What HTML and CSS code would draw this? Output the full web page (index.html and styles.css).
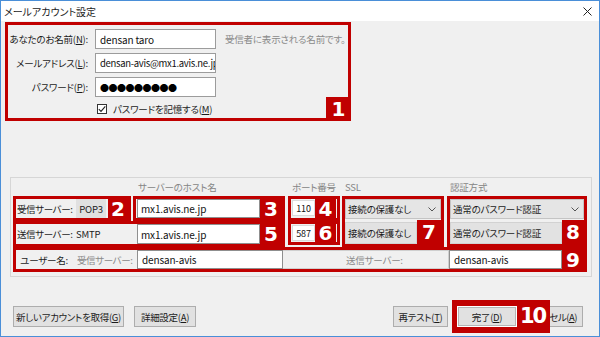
FILE: index.html
```html
<!DOCTYPE html>
<html lang="ja">
<head>
    <meta charset="UTF-8">
    <meta name="viewport" content="width=device-width, initial-scale=1.0">
    <title>メールアカウント設定</title>
    <link rel="stylesheet" href="styles.css">
</head>
<body>
<div class="window">
    <div class="titlebar">
        <span class="title">メールアカウント設定</span>
        <svg class="close" width="9" height="9" viewBox="0 0 9 9">
            <path d="M0.5 0.5L8.5 8.5M8.5 0.5L0.5 8.5" stroke="#222" stroke-width="1" fill="none"/>
        </svg>
    </div>

    <!-- 1: identity -->
    <div class="identity">
        <div class="form-row">
            <span class="lbl">あなたのお名前(<u>N</u>):</span>
            <div class="input">densan taro</div>
            <span class="hint">受信者に表示される名前です。</span>
        </div>
        <div class="form-row">
            <span class="lbl">メールアドレス(<u>L</u>):</span>
            <div class="input mail">densan-avis@mx1.avis.ne.jp</div>
        </div>
        <div class="form-row">
            <span class="lbl">パスワード(<u>P</u>):</span>
            <div class="input dots">●●●●●●●●●</div>
        </div>
        <div class="check-row">
            <span class="checkbox">
                <svg width="8" height="8" viewBox="0 0 8 8"><path d="M0.8 4.2L3 6.4L7.3 1.3" stroke="#222" stroke-width="1.1" fill="none"/></svg>
            </span>
            <span>パスワードを記憶する(<u>M</u>)</span>
        </div>
        <span class="badge">1</span>
    </div>

    <!-- server settings -->
    <div class="group">
        <div class="grid">
            <div class="head h-host">サーバーのホスト名</div>
            <div class="head h-port">ポート番号</div>
            <div class="head h-ssl">SSL</div>
            <div class="head h-auth">認証方式</div>

            <div class="rbox b-proto">
                <div class="cell">
                    <span class="srv-lbl">受信サーバー:</span>
                    <span class="proto">POP3</span>
                </div>
                <span class="num w20">2</span>
            </div>
            <div class="rbox b-host">
                <div class="input host">mx1.avis.ne.jp</div>
                <span class="num w22">3</span>
            </div>
            <div class="rbox b-port1">
                <div class="input port">110</div>
                <span class="num w21">4</span>
            </div>

            <div class="rbox b-out">
                <div class="cell">
                    <span class="srv-lbl">送信サーバー:</span>
                    <span class="smtp">SMTP</span>
                </div>
                <div class="input host">mx1.avis.ne.jp</div>
                <span class="num w22">5</span>
            </div>
            <div class="rbox b-port2">
                <div class="input port">587</div>
                <span class="num w21">6</span>
            </div>

            <div class="rbox stack b-ssl">
                <div class="select">接続の保護なし
                    <svg width="8" height="5" viewBox="0 0 8 5"><path d="M0.5 0.5L4 4L7.5 0.5" stroke="#555" fill="none"/></svg>
                </div>
                <div class="lower">
                    <span class="flat">接続の保護なし</span>
                    <span class="num w24">7</span>
                </div>
            </div>
            <div class="rbox stack b-auth">
                <div class="select">通常のパスワード認証
                    <svg width="8" height="5" viewBox="0 0 8 5"><path d="M0.5 0.5L4 4L7.5 0.5" stroke="#555" fill="none"/></svg>
                </div>
                <div class="lower">
                    <span class="flat">通常のパスワード認証</span>
                    <span class="num w22">8</span>
                </div>
            </div>

            <div class="rbox b-user">
                <div class="cell">
                    <span class="user-lbl">ユーザー名:</span>
                    <span class="sub">受信サーバー:</span>
                </div>
                <div class="input user-in">densan-avis</div>
                <div class="disabled"><span>送信サーバー:</span></div>
                <div class="input user-out">densan-avis</div>
                <span class="num w22">9</span>
            </div>
        </div>
    </div>

    <div class="footer">
        <div class="btn-group">
            <button class="btn b-new">新しいアカウントを取得(<u>G</u>)</button>
            <button class="btn b-adv">詳細設定(<u>A</u>)</button>
        </div>
        <div class="btn-group right">
            <button class="btn b-retest">再テスト(<u>T</u>)</button>
            <div class="done-box">
                <button class="btn b-done">完了(<u>D</u>)</button>
                <span class="num ten">10</span>
            </div>
            <button class="btn b-cancel">キャンセル(<u>A</u>)</button>
        </div>
    </div>
</div>
</body>
</html>
```

FILE: styles.css
```css
body {
    margin: 0;
    font-family: "Noto Sans CJK JP", sans-serif;
    font-size: 9.5px;
    font-feature-settings: "palt";
    letter-spacing: -0.2px;
    color: #1c1c1c;
    background: #fff;
}
u {
    text-decoration: underline;
}
.window {
    width: 600px;
    height: 337px;
    box-sizing: border-box;
    border: 1px solid #4a8fd8;
    background: #f0f0f0;
    overflow: hidden;
}
.titlebar {
    height: 20px;
    background: #fff;
    display: flex;
    align-items: center;
    justify-content: space-between;
    padding: 0 7px 0 3px;
}
.title {
    font-size: 10px;
    letter-spacing: 0;
}

/* box 1 */
.identity {
    position: relative;
    margin: 1px 0 0 4px;
    width: 346px;
    height: 99px;
    box-sizing: border-box;
    border: 3px solid #c00000;
    padding-top: 4px;
}
.form-row {
    display: flex;
    align-items: center;
    height: 20px;
    margin-bottom: 4px;
}
.lbl {
    width: 80px;
    margin-right: 7px;
    text-align: right;
    white-space: nowrap;
}
.input {
    box-sizing: border-box;
    height: 20px;
    width: 121px;
    background: #fff;
    border: 1px solid #9c9c9c;
    padding: 0 4px;
    display: flex;
    align-items: center;
    white-space: nowrap;
    overflow: hidden;
    color: #111;
    font-size: 10px;
    letter-spacing: -0.15px;
}
.input.mail {
    font-size: 9.5px;
    letter-spacing: -0.3px;
}
.dots {
    font-size: 9px;
    letter-spacing: -0.5px;
    color: #000;
}
.hint {
    margin-left: 9px;
    color: #8a8a8a;
    white-space: nowrap;
}
.check-row {
    display: flex;
    align-items: center;
    height: 16px;
    margin-left: 89px;
}
.checkbox {
    width: 10px;
    height: 10px;
    box-sizing: border-box;
    border: 1px solid #333;
    background: #fff;
    display: flex;
    align-items: center;
    justify-content: center;
    margin-right: 6px;
}
.badge {
    position: absolute;
    right: -3px;
    bottom: -3px;
    width: 25px;
    height: 24px;
    background: #c00000;
    color: #fff;
    font: bold 20px/1 "DejaVu Sans", sans-serif;
    letter-spacing: 0;
    display: flex;
    align-items: center;
    justify-content: center;
}

/* server group */
.group {
    margin: 56px 0 0 9px;
    width: 582px;
    height: 100px;
    box-sizing: border-box;
    border: 1px solid #d6d6d6;
    padding-left: 2px;
}
.grid {
    display: grid;
    grid-template-columns: 118px 2px 152px 3px 52px 2px 102px 3px 140px;
    grid-template-rows: 18px 25px 26px 25px;
}
.head {
    grid-row: 1;
    display: flex;
    align-items: center;
    color: #858585;
    white-space: nowrap;
}
.h-host { grid-column: 3; padding-left: 5px; }
.h-port { grid-column: 5; padding-left: 4px; }
.h-ssl { grid-column: 7; padding-left: 3px; }
.h-auth { grid-column: 9; padding-left: 3px; }

.rbox {
    border: 3px solid #c00000;
    display: flex;
    box-sizing: border-box;
    min-width: 0;
}
.num {
    background: #c00000;
    color: #fff;
    font: bold 20px/1 "DejaVu Sans", sans-serif;
    letter-spacing: 0;
    display: flex;
    align-items: center;
    justify-content: center;
    flex-shrink: 0;
}
.w20 { width: 20px; }
.w21 { width: 21px; }
.w22 { width: 22px; }
.w24 { width: 24px; }

.b-proto { grid-column: 1; grid-row: 2; }
.b-host { grid-column: 3; grid-row: 2; }
.b-port1 { grid-column: 5; grid-row: 2; }
.b-out { grid-column: 1 / 4; grid-row: 3; }
.b-port2 { grid-column: 5; grid-row: 3; height: 24px; }
.b-ssl { grid-column: 7; grid-row: 2 / 4; }
.b-auth { grid-column: 9; grid-row: 2 / 4; }
.b-user { grid-column: 1 / 10; grid-row: 4; }

.cell {
    display: flex;
    align-items: center;
    white-space: nowrap;
}
.b-proto .cell { width: 92px; padding-left: 1px; box-sizing: border-box; }
.b-out .cell { width: 121px; padding-left: 1px; box-sizing: border-box; }
.b-user .cell { width: 121px; }
.srv-lbl {
    width: 59px;
    letter-spacing: -0.4px;
}
.proto {
    width: 30px;
    height: 19px;
    background: #e0e0e0;
    display: flex;
    align-items: center;
    justify-content: center;
}
.input.host {
    width: 123px;
    height: auto;
    margin-left: 1px;
    padding-left: 3px;
    border-color: #8f8f8f;
}
.b-out .input.host {
    margin-left: 0;
}
.input.port {
    width: 23px;
    height: 16px;
    margin: 1px 0 0 1px;
    padding: 0;
    justify-content: center;
    font-size: 9px;
    border-color: #dadada;
}

.stack {
    flex-direction: column;
}
.select {
    height: 20px;
    box-sizing: border-box;
    background: #e5e5e5;
    border: 1px solid #c4c4c4;
    display: flex;
    align-items: center;
    justify-content: space-between;
    padding: 0 4px 0 2px;
    white-space: nowrap;
}
.lower {
    flex: 1;
    display: flex;
    margin-top: 1px;
}
.flat {
    flex: 1;
    margin-top: 2px;
    background: #e2e2e2;
    border: 1px solid #d2d2d2;
    display: flex;
    align-items: center;
    padding-left: 2px;
    white-space: nowrap;
}

.user-lbl {
    width: 52px;
    text-align: right;
}
.sub {
    margin-left: 9px;
    color: #8a8a8a;
    letter-spacing: -0.4px;
}
.input.user-in {
    width: 146px;
    height: auto;
    border-color: #8f8f8f;
}
.disabled {
    width: 166px;
    box-sizing: border-box;
    border: 1px solid #cfcfcf;
    border-left: none;
    display: flex;
    align-items: center;
    padding-left: 63px;
    color: #8a8a8a;
    white-space: nowrap;
}
.input.user-out {
    width: 113px;
    height: auto;
    border-color: #8f8f8f;
}

/* footer */
.footer {
    display: flex;
    justify-content: space-between;
    align-items: center;
    height: 33px;
    margin-top: 23px;
    padding: 0 16px 0 12px;
}
.btn-group {
    display: flex;
    align-items: center;
}
.btn {
    height: 21px;
    box-sizing: border-box;
    border: 1px solid #adadad;
    background: #e1e1e1;
    font-family: "Noto Sans CJK JP", sans-serif;
    font-size: 9.5px;
    font-feature-settings: "palt";
    letter-spacing: -0.3px;
    color: #1c1c1c;
    padding: 0;
    display: flex;
    align-items: center;
    justify-content: center;
    white-space: nowrap;
}
.b-new { width: 111px; margin-right: 10px; }
.b-adv { width: 62px; }
.b-retest { width: 55px; margin-right: 4px; }
.done-box {
    position: relative;
    z-index: 1;
    height: 33px;
    box-sizing: border-box;
    background: #c00000;
    display: flex;
    align-items: center;
    padding-left: 5px;
}
.b-done {
    width: 60px;
    border: 1px solid #fff;
    box-shadow: inset 0 0 0 1px #b5b5b5;
}
.num.ten {
    width: 33px;
    height: 33px;
    font-size: 21px;
    letter-spacing: -2px;
    padding-right: 2px;
    box-sizing: border-box;
}
.b-cancel {
    width: 58px;
    margin-left: -25px;
    justify-content: flex-end;
    padding-right: 5px;
    letter-spacing: -0.5px;
}
```
